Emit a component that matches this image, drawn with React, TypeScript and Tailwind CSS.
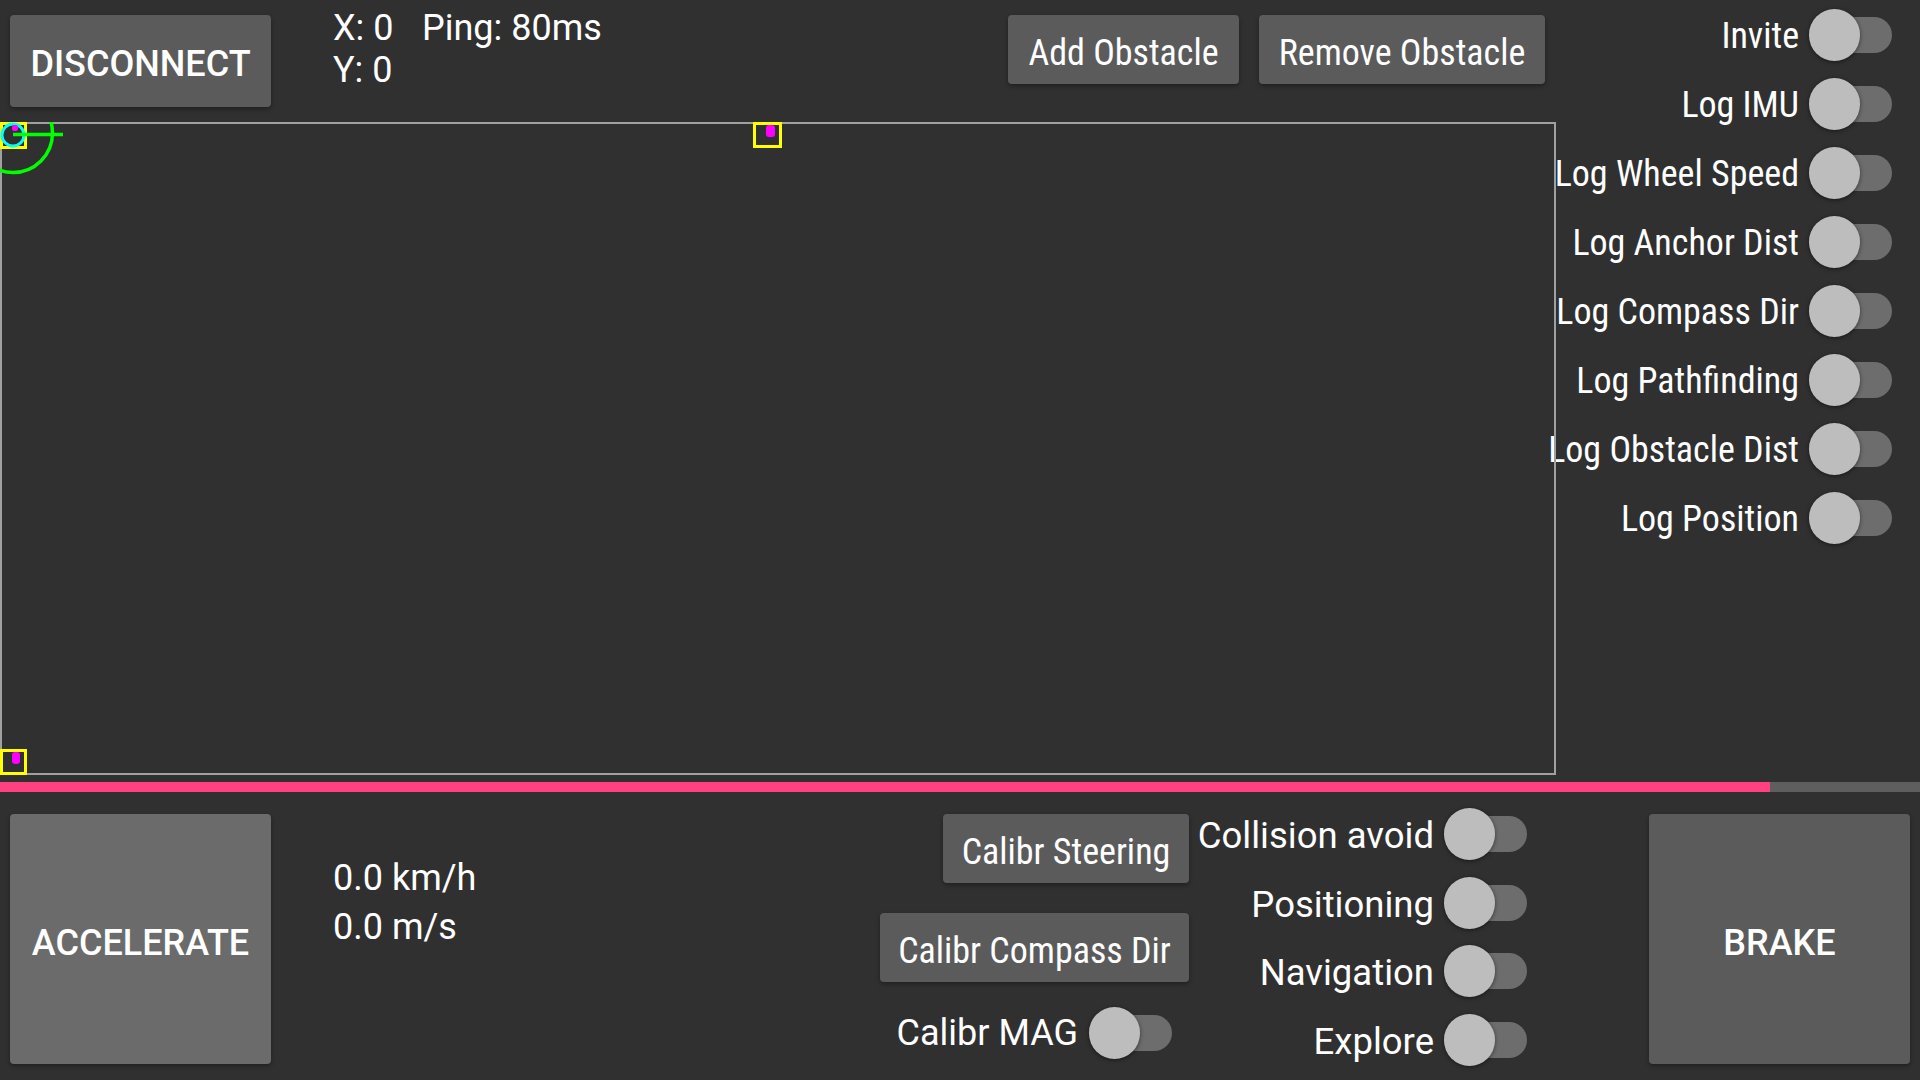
import React from 'react';

const condensed = "font-['Roboto_Condensed','Roboto',sans-serif] font-stretch-[87.5%]";

function Toggle() {
  return (
    <div className="relative w-[83px] h-[52px] shrink-0">
      <div className="absolute left-[10px] right-0 top-[8px] h-[36px] rounded-full bg-[#6d6d6d]" />
      <div className="absolute left-0 top-0 w-[51px] h-[52px] rounded-full bg-[#bdbdbd] shadow-[0_1px_4px_rgba(0,0,0,0.5)]" />
    </div>
  );
}

function SideSwitch({ label }: { label: string }) {
  return (
    <div className="h-[69px] flex items-center justify-end pr-[28px]">
      <span className={`${condensed} text-[36px] text-white whitespace-nowrap mr-[10px] pt-[3px]`}>{label}</span>
      <Toggle />
    </div>
  );
}

function ModeSwitch({ label }: { label: string }) {
  return (
    <div className="h-[68.5px] flex items-center justify-end">
      <span className="text-[36.5px] text-white whitespace-nowrap mr-[10px] pt-[5px]">{label}</span>
      <Toggle />
    </div>
  );
}

function FlatButton({ label, className }: { label: string; className: string }) {
  return (
    <button
      className={`${condensed} ${className} h-[69px] pt-[6px] rounded-[4px] bg-[#5b5b5c] text-white text-[36px] flex items-center justify-center shadow-[0_2px_4px_rgba(0,0,0,0.35)]`}
    >
      {label}
    </button>
  );
}

function MapCanvas() {
  return (
    <div className="relative flex-1 border-2 border-[#a0a0a0]">
      <svg
        className="absolute -left-[2px] -top-[2px] overflow-hidden"
        width={1556}
        height={653}
        viewBox="0 0 1556 653"
      >
        {/* robot */}
        <rect x={1.5} y={1.5} width={24} height={24} fill="none" stroke="#ffff00" strokeWidth={3} />
        <circle cx={13} cy={13} r={11} fill="none" stroke="#00ffff" strokeWidth={3} />
        <rect x={12} y={3} width={6} height={6} rx={2} fill="#ff00ff" />
        <line x1={13} y1={12.5} x2={63} y2={12.5} stroke="#00ff00" strokeWidth={3.5} />
        <circle cx={13} cy={11} r={39.5} fill="none" stroke="#00ff00" strokeWidth={3.5} />

        {/* anchors */}
        <rect x={754.5} y={1.5} width={26} height={23} fill="none" stroke="#ffff00" strokeWidth={3} />
        <rect x={766} y={3} width={9} height={12} rx={3} fill="#ff00ff" />

        <rect x={1.5} y={628.5} width={24} height={23} fill="none" stroke="#ffff00" strokeWidth={3} />
        <rect x={12} y={630} width={8} height={12} rx={3} fill="#ff00ff" />
      </svg>
    </div>
  );
}

export default function App() {
  const sideSwitches = [
    'Invite',
    'Log IMU',
    'Log Wheel Speed',
    'Log Anchor Dist',
    'Log Compass Dir',
    'Log Pathfinding',
    'Log Obstacle Dist',
    'Log Position',
  ];
  const modes = ['Collision avoid', 'Positioning', 'Navigation', 'Explore'];

  return (
    <div className="w-[1920px] h-[1080px] bg-[#303030] flex flex-col overflow-hidden font-['Roboto',sans-serif] text-white select-none">
      {/* Top: header + map + log switches */}
      <div className="flex h-[775px]">
        <div className="w-[1556px] flex flex-col shrink-0">
          <div className="h-[122px] flex items-start">
            <button className="ml-[10px] mt-[15px] w-[261px] h-[92px] pt-[5px] rounded-[4px] bg-[#5b5b5c] text-[36px] font-medium shadow-[0_2px_4px_rgba(0,0,0,0.35)]">
              DISCONNECT
            </button>
            <div className="ml-[62px] mt-[7px] flex text-[36px] leading-[42px]">
              <div className="w-[89px]">
                <div>X: 0</div>
                <div>Y: 0</div>
              </div>
              <div>Ping: 80ms</div>
            </div>
            <div className="ml-auto mr-[11px] mt-[15px] flex gap-[20px]">
              <FlatButton label="Add Obstacle" className="w-[231px] h-[68px]" />
              <FlatButton label="Remove Obstacle" className="w-[286px] h-[68px]" />
            </div>
          </div>
          <MapCanvas />
        </div>
        <div className="flex-1 min-w-0 flex flex-col">
          {sideSwitches.map((s) => (
            <SideSwitch key={s} label={s} />
          ))}
        </div>
      </div>

      {/* Speed bar */}
      <div className="mt-[7px] h-[10px] flex">
        <div className="w-[1770px] bg-[#ff4081]" />
        <div className="flex-1 bg-[#5e5e5e]" />
      </div>

      {/* Bottom controls */}
      <div className="flex flex-1">
        <button className="ml-[10px] mt-[22px] w-[261px] h-[250px] pt-[7px] rounded-[4px] bg-[#6b6b6c] text-[36px] font-medium shadow-[0_2px_4px_rgba(0,0,0,0.35)]">
          ACCELERATE
        </button>
        <div className="ml-[62px] mt-[62px] text-[36px] leading-[49px]">
          <div>0.0 km/h</div>
          <div>0.0 m/s</div>
        </div>

        <div className="ml-auto w-[309px] mt-[22px] flex flex-col items-end">
          <FlatButton label="Calibr Steering" className="w-[246px]" />
          <FlatButton label="Calibr Compass Dir" className="w-[309px] mt-[30px]" />
          <div className="mt-[23px] mr-[17px] flex items-center">
            <span className="text-[36px] whitespace-nowrap mr-[11px] pt-[1px]">Calibr MAG</span>
            <Toggle />
          </div>
        </div>

        <div className="w-[338px] mt-[8px] flex flex-col">
          {modes.map((m) => (
            <ModeSwitch key={m} label={m} />
          ))}
        </div>

        <button className="ml-[122px] mr-[10px] mt-[22px] w-[261px] h-[250px] pt-[7px] rounded-[4px] bg-[#5b5b5c] text-[36px] font-medium shadow-[0_2px_4px_rgba(0,0,0,0.35)]">
          BRAKE
        </button>
      </div>
    </div>
  );
}
